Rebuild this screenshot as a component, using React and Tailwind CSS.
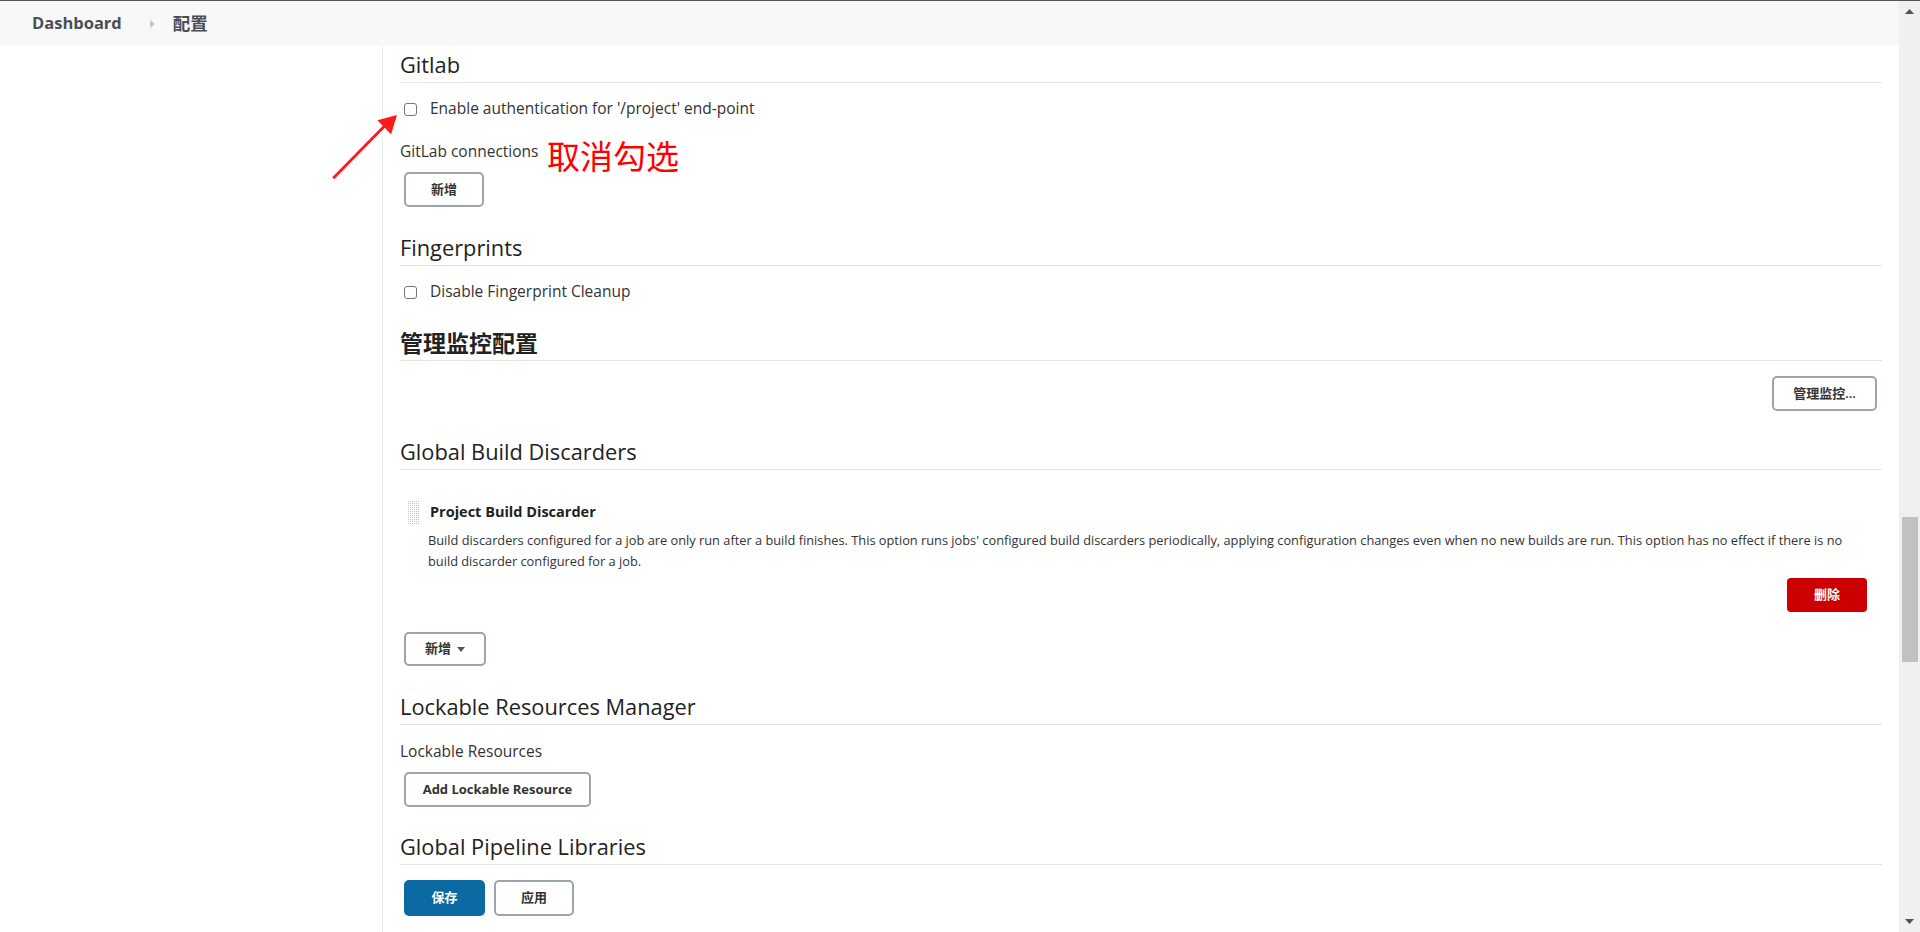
import React from "react";

const btn =
  "flex items-center justify-center border-2 border-[#9ba5ae] rounded-[5px] bg-white text-[#333] text-[13px] font-bold";

const SectionTitle = ({ children, cjk, first, last }) => (
  <div
    className={`${first ? "mt-0" : last ? "mt-[26px]" : "mt-[27px]"} pb-[3px] border-b border-[#e2e5e8] leading-[28px] text-[#222] ${
      cjk ? "text-[23px] font-bold" : "text-[21.8px] font-medium"
    }`}
  >
    {children}
  </div>
);

const Checkbox = ({ label }) => (
  <label className="mt-[16px] h-[20px] flex items-center">
    <span className="ml-[4px] w-[13px] h-[13px] border border-[#767676] rounded-[3px] bg-white" />
    <span className="ml-[13px] text-[15.5px] text-[#333]">{label}</span>
  </label>
);

const DragHandle = () => (
  <svg width="12" height="23" viewBox="0 0 12 23">
    <defs>
      <pattern id="dots" width="2" height="2" patternUnits="userSpaceOnUse">
        <rect width="1" height="1" fill="#c4c4c4" />
      </pattern>
    </defs>
    <rect width="12" height="23" fill="url(#dots)" />
  </svg>
);

const App = () => {
  return (
    <div className="h-[932px] w-full overflow-hidden bg-white flex flex-col font-['Open_Sans','Noto_Sans_CJK_SC',sans-serif]">
      <div className="h-px bg-[#555]" />
      <div className="flex flex-1 min-h-0">
        <div className="flex-1 flex flex-col min-w-0">
          {/* Header */}
          <header className="h-[45px] bg-[#f8f8f8] flex items-center pl-[32px] text-[#4a4f57]">
            <span className="text-[16.5px] font-bold">Dashboard</span>
            <svg width="5" height="8" viewBox="0 0 5 8" className="ml-[28px]">
              <path d="M0 0 L5 4 L0 8 Z" fill="#c6c6c6" />
            </svg>
            <span className="ml-[18px] text-[17.5px] font-semibold">配置</span>
          </header>

          <div className="flex flex-1 relative">
            <aside className="w-[383px] border-r border-[#e9ecef]" />

            <main className="flex-1 flex flex-col pl-[17px] pr-[17px] pt-[5px]">
              {/* Gitlab */}
              <SectionTitle first>Gitlab</SectionTitle>
              <Checkbox label="Enable authentication for '/project' end-point" />
              <div className="mt-[22px] h-[20px] leading-[20px] text-[15.5px] text-[#333]">GitLab connections</div>
              <button className={`${btn} mt-[11px] ml-[4px] w-[80px] h-[35px]`}>新增</button>

              {/* Fingerprints */}
              <SectionTitle>Fingerprints</SectionTitle>
              <Checkbox label="Disable Fingerprint Cleanup" />

              {/* 管理监控配置 */}
              <SectionTitle cjk>管理监控配置</SectionTitle>
              <div className="mt-[15px] flex justify-end pr-[5px]">
                <button className={`${btn} w-[105px] h-[35px] font-semibold`}>管理监控...</button>
              </div>

              {/* Global Build Discarders */}
              <SectionTitle>Global Build Discarders</SectionTitle>
              <div className="mt-[32px] ml-[8px] mr-[15px]">
                <div className="flex items-start">
                  <div className="-mt-[1px]">
                    <DragHandle />
                  </div>
                  <div className="ml-[10px] flex-1">
                    <div className="h-[20px] leading-[20px] text-[14.5px] font-bold text-[#222]">Project Build Discarder</div>
                    <p className="mt-[8px] -ml-[2px] text-[12.8px] leading-[21px] text-[#333]">
                      Build discarders configured for a job are only run after a build finishes. This option runs jobs' configured build discarders periodically, applying configuration changes even when no new builds are run. This option has no effect if there is no build discarder configured for a job.
                    </p>
                  </div>
                </div>
                <div className="mt-[6px] flex justify-end">
                  <button className="w-[80px] h-[34px] rounded-[4px] bg-[#cc0000] text-white text-[13px] font-bold flex items-center justify-center">
                    删除
                  </button>
                </div>
              </div>
              <button className={`${btn} mt-[20px] ml-[4px] w-[82px] h-[34px] gap-[6px]`}>
                新增
                <svg width="8" height="5" viewBox="0 0 8 5">
                  <path d="M0 0 L8 0 L4 5 Z" fill="#555" />
                </svg>
              </button>

              {/* Lockable Resources Manager */}
              <SectionTitle>Lockable Resources Manager</SectionTitle>
              <div className="mt-[16px] h-[20px] leading-[20px] text-[15.5px] text-[#333]">Lockable Resources</div>
              <button className={`${btn} mt-[11px] ml-[4px] w-[187px] h-[35px] text-[12px]`}>Add Lockable Resource</button>

              {/* Global Pipeline Libraries */}
              <SectionTitle last>Global Pipeline Libraries</SectionTitle>
              <div className="mt-[15px] ml-[4px] flex gap-[9px]">
                <button className="w-[81px] h-[36px] rounded-[5px] bg-[#0b6aa2] text-white text-[13px] font-bold flex items-center justify-center">
                  保存
                </button>
                <button className={`${btn} w-[80px] h-[36px]`}>应用</button>
              </div>
            </main>

            {/* annotation */}
            <svg className="absolute left-[325px] top-[59px]" width="80" height="80" viewBox="0 0 80 80">
              <polygon
                points="9.2,74.2 59.8,22.8 66,29.6 72,10 52.4,15.2 57.8,20.8 7.2,72.2"
                fill="#ff1a1a"
              />
            </svg>
            <div className="absolute left-[547px] top-[93px] text-[33px] leading-[33px] text-[#ff0000] font-['Noto_Sans_CJK_SC',sans-serif]">
              取消勾选
            </div>
          </div>
        </div>

        {/* Scrollbar */}
        <div className="w-[21px] bg-[#f0f0f0] flex flex-col items-center">
          <div className="h-[21px] flex items-center justify-center">
            <svg width="9" height="5" viewBox="0 0 9 5">
              <path d="M0 5 L4.5 0 L9 5 Z" fill="#505050" />
            </svg>
          </div>
          <div className="flex-1 w-full flex flex-col">
            <div className="mt-[495px] mx-auto w-[16px] h-[145px] bg-[#c1c1c1]" />
          </div>
          <div className="h-[21px] flex items-center justify-center">
            <svg width="9" height="5" viewBox="0 0 9 5">
              <path d="M0 0 L9 0 L4.5 5 Z" fill="#505050" />
            </svg>
          </div>
        </div>
      </div>
    </div>
  );
};

export default App;
